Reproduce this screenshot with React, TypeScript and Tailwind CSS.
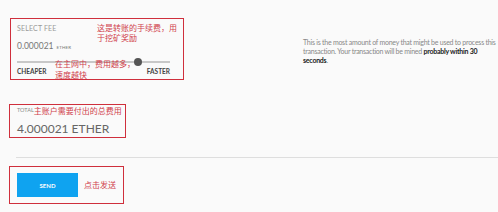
export default function App() {
  const cjk = "font-['Noto_Sans_CJK_SC',sans-serif]";
  return (
    <div className="relative h-[212px] w-[498px] overflow-hidden bg-[#fafafa] font-['Lato',sans-serif]">
      {/* Fee row */}
      <div className="flex pl-[10px] pt-[18px]">
        <div className="relative h-[62px] w-[174px] shrink-0 border-[1.5px] border-[#cf2f3c] pl-[6px] pt-[5px]">
          <div className="text-[7px] leading-[9px] tracking-wide text-[#999]">SELECT FEE</div>
          <div className="mt-[8px] flex items-baseline gap-[3px] text-[#777]">
            <span className="text-[8.5px] leading-[10px]">0.000021</span>
            <span className="text-[4.5px] tracking-wide">ETHER</span>
          </div>
          <div className="relative mt-[9px] h-[2px] w-[153px] bg-[#c8c8c8]">
            <div className="absolute left-[117px] top-[-3px] h-[8px] w-[8px] rounded-full bg-[#555]" />
          </div>
          <div className="mt-[5px] flex w-[153px] justify-between text-[6.5px] font-bold leading-[8px] text-[#444]">
            <span>CHEAPER</span>
            <span>FASTER</span>
          </div>
          <div className={`absolute left-[86px] top-[4px] w-[86px] text-[8px] leading-[10px] text-[#d0414c] ${cjk}`}>
            这是转账的手续费，用于挖矿奖励
          </div>
          <div className={`absolute left-[44px] top-[39px] w-[84px] text-[8px] leading-[11px] text-[#d0414c] ${cjk}`}>
            在主网中，费用越多，速度越快
          </div>
        </div>
        <p className="ml-[119px] mt-[20px] w-[194px] shrink-0 whitespace-nowrap text-[7px] leading-[9px] tracking-[-0.25px] text-[#888]">
          This is the most amount of money that might be used to process this
          <br />
          transaction. Your transaction will be mined <b className="text-[#222]">probably within 30</b>
          <br />
          <b className="text-[#222]">seconds</b>.
        </p>
      </div>

      {/* Total */}
      <div className="relative ml-[9px] mt-[24px] h-[34px] w-[117px] border-[1.5px] border-[#cf2f3c] pl-[7px]">
        <div className="flex items-start pt-[1px]">
          <span className="text-[5.5px] leading-[8px] text-[#888]">TOTAL</span>
          <span className={`whitespace-nowrap text-[8px] leading-[10px] text-[#d0414c] ${cjk}`}>
            主账户需要付出的总费用
          </span>
        </div>
        <div className="mt-[6px] whitespace-nowrap text-[12px] leading-[14px] text-[#666]">4.000021 ETHER</div>
      </div>

      {/* Divider */}
      <div className="ml-[16px] mt-[19px] h-[1px] bg-[#dedede]" />

      {/* Send */}
      <div className="ml-[9px] mt-[8px] flex h-[38px] w-[115px] items-center gap-[6px] border-[1.5px] border-[#cf2f3c] pl-[7px]">
        <button className="flex h-[24px] w-[61px] items-center justify-center bg-[#0fa3f0] text-[6px] font-bold text-white">
          SEND
        </button>
        <span className={`text-[8px] text-[#d0414c] ${cjk}`}>点击发送</span>
      </div>
    </div>
  );
}
